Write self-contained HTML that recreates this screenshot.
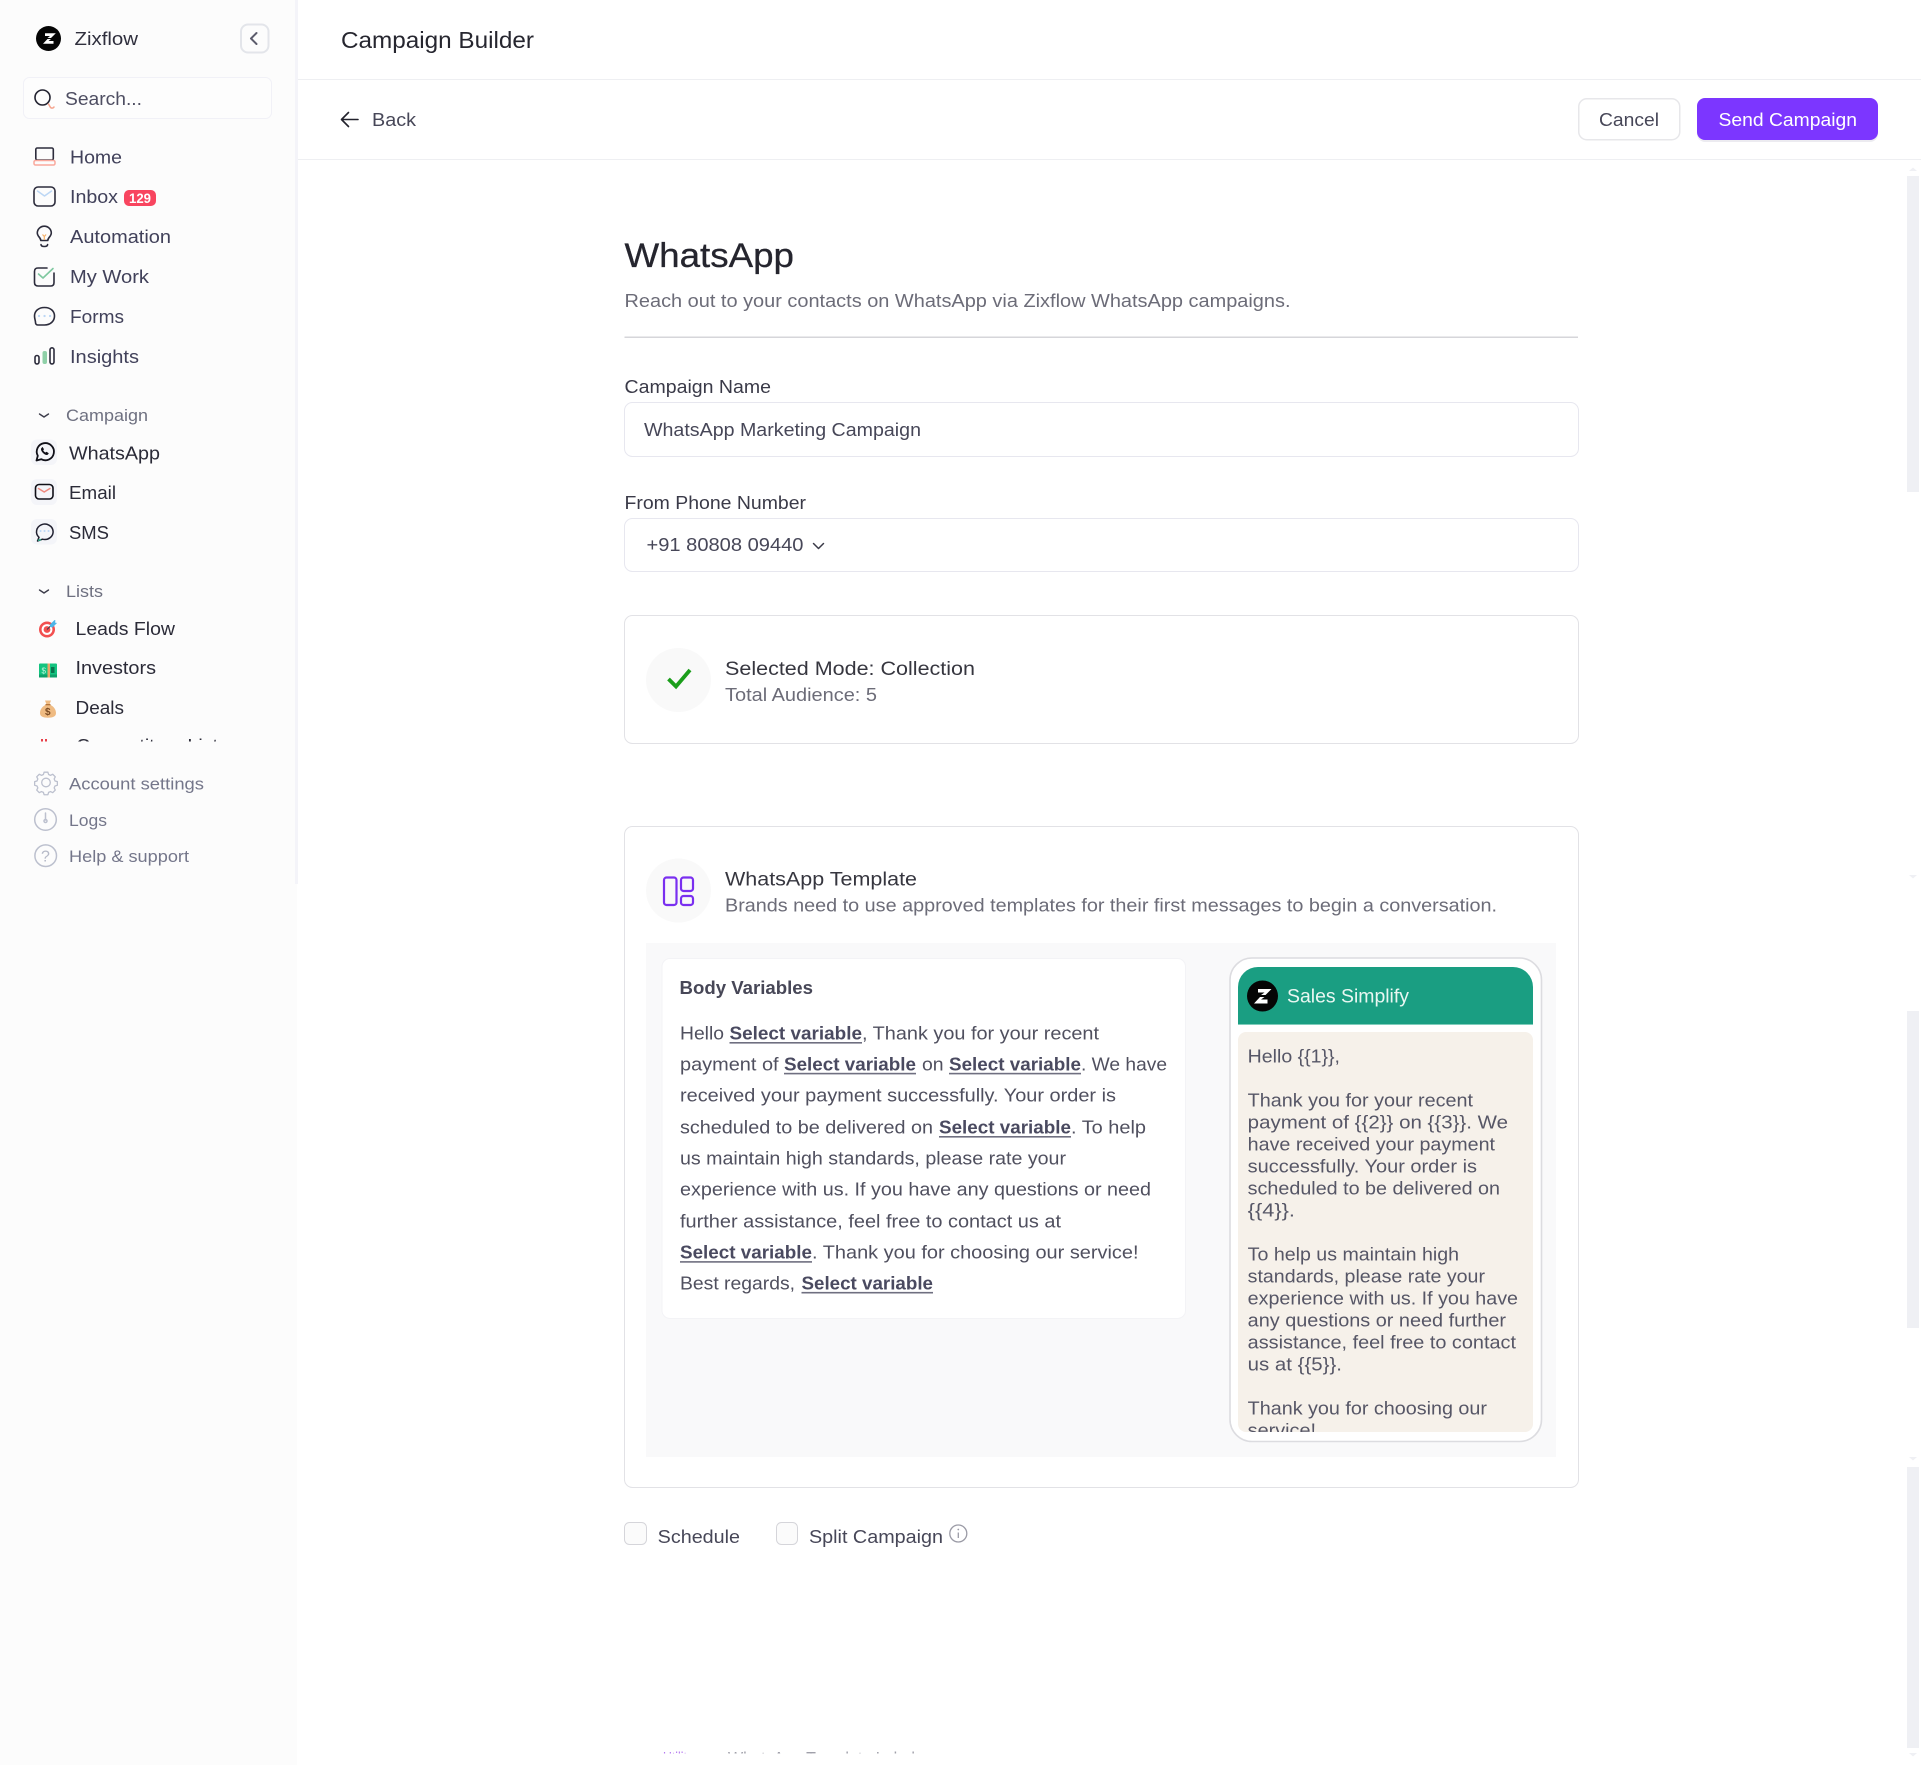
<!DOCTYPE html>
<html lang="en">
<head>
<meta charset="utf-8">
<title>Campaign Builder</title>
<style>
html,body{margin:0;padding:0;background:#fff;width:1921px;height:1765px;overflow:hidden}
svg{display:block}
text{font-family:"Liberation Sans",sans-serif;white-space:pre}
.nav{font-size:18px;fill:#41415a}
.item{font-size:18px;fill:#2b2b38}
.sec{font-size:17px;fill:#6e7080}
.foot{font-size:17px;fill:#74768a}
.lab{font-size:18px;fill:#3a3a48}
.sub{font-size:18px;fill:#6c6c78}
.val{font-size:18px;fill:#474758}
.tt{font-size:19px;fill:#36363f}
.b{font-size:18px;fill:#50505f}
.s{font-size:18px;fill:#4a4a60;font-weight:700}
.p{font-size:18px;fill:#565666}
.ic{fill:none;stroke:#2c2c3c;stroke-width:1.6;stroke-linecap:round;stroke-linejoin:round}
.fi{fill:none;stroke:#bcc0ce;stroke-width:1.5;stroke-linecap:round;stroke-linejoin:round}
</style>
</head>
<body>
<svg xmlns="http://www.w3.org/2000/svg" width="1921" height="1765" viewBox="0 0 1921 1765">
<defs>
<clipPath id="c1"><rect x="0" y="700" width="295" height="41.5"/></clipPath>
<clipPath id="c2"><rect x="1238" y="1032" width="295" height="400" rx="8"/></clipPath>
<clipPath id="c3"><rect x="600" y="1745" width="400" height="8.5"/></clipPath>
</defs>
<rect width="1921" height="1765" fill="#fff"/>

<!-- sidebar -->
<rect x="0" y="0" width="297" height="1765" fill="#fcfcfc"/>
<rect x="295" y="0" width="3" height="884" fill="#f4f4f9"/>

<circle cx="48.5" cy="38.5" r="12.5" fill="#050505"/>
<path d="M45 33.200H55.800L51 38H47.500L50 36H45zM43 43.800H53.500V41H48.500L51 39H47.500z" fill="#fff"/>
<text x="74.500" y="45" class="nav" style="fill:#2f2f3d" textLength="63.500" lengthAdjust="spacingAndGlyphs">Zixflow</text>
<rect x="241" y="24.500" width="27.500" height="28" rx="7" fill="#fcfcfc" stroke="#e3e5ea" stroke-width="2"/>
<path d="M256.500 33l-5.500 5.500 5.500 5.500" fill="none" stroke="#5c5c6c" stroke-width="2" stroke-linecap="round" stroke-linejoin="round"/>

<rect x="23.500" y="77.500" width="248" height="41" rx="6" fill="#fdfdfd" stroke="#f1f1f7"/>
<circle cx="42.500" cy="97.500" r="7.500" fill="none" stroke="#222230" stroke-width="1.600"/>
<path d="M48.500 104l2 3.500q2 1.500 3.500-.5" fill="none" stroke="#f5a58f" stroke-width="1.500" stroke-linecap="round"/>
<text x="65" y="105" class="nav" style="fill:#4e4e62" textLength="77" lengthAdjust="spacingAndGlyphs">Search...</text>

<rect x="35.800" y="148" width="17.500" height="12" rx="1.500" class="ic"/>
<rect x="34" y="160.500" width="21" height="4.500" rx="1.500" fill="none" stroke="#f9a89c" stroke-width="1.500"/>
<text x="70" y="163.500" class="nav" textLength="52" lengthAdjust="spacingAndGlyphs">Home</text>

<rect x="34" y="187" width="21" height="19" rx="4" class="ic"/>
<path d="M37.500 191l7 5 7-5" fill="none" stroke="#bcd7f5" stroke-width="1.500" stroke-linecap="round" stroke-linejoin="round"/>
<text x="70" y="203" class="nav" textLength="48" lengthAdjust="spacingAndGlyphs">Inbox</text>
<rect x="124" y="190" width="32" height="16" rx="5" fill="#f8455f"/>
<text x="129" y="203" style="font-size:14px;fill:#fff;font-weight:700" textLength="22" lengthAdjust="spacingAndGlyphs">129</text>

<path d="M40.800 240.500c0-3-3.500-4-3.500-7.500a7 6.800 0 0 1 14 0c0 3.500-3.500 4.500-3.500 7.500z" class="ic"/>
<path d="M41 244.500q0 2 3.300 2t3.300-2" class="ic"/>
<path d="M42.500 234.500l1.800 2 1.800-2M44.300 236.500v3.500" fill="none" stroke="#f6b26b" stroke-width="1.200"/>
<text x="70" y="243" class="nav" textLength="101" lengthAdjust="spacingAndGlyphs">Automation</text>

<path d="M47 268h-9q-3.500 0-3.500 3.500v11q0 3.500 3.500 3.500h13q3 0 3-3.500v-9.500" class="ic"/>
<path d="M38.500 274l4.500 4 10-9.500" fill="none" stroke="#7fc8a0" stroke-width="1.600" stroke-linecap="round" stroke-linejoin="round"/>
<text x="70" y="283" class="nav" textLength="79" lengthAdjust="spacingAndGlyphs">My Work</text>

<path d="M44.500 307.500c-6 0-10 3.500-10 8.500 0 2.800 1 4.500 1 6.500 0 1.500 1 2.500 2.500 2.500h6.500c6 0 10-4 10-9s-4-8.500-10-8.500z" class="ic"/>
<path d="M39 316h.1M44.500 316h.1M50 316h.1" stroke="#bcd7f5" stroke-width="2.200" stroke-linecap="round"/>
<text x="70" y="323" class="nav" textLength="54" lengthAdjust="spacingAndGlyphs">Forms</text>

<rect x="35" y="355.500" width="4" height="8.500" rx="2" class="ic"/>
<rect x="42.500" y="351" width="4.500" height="13" rx="2" fill="#8fd0a8"/>
<rect x="50" y="347.800" width="4" height="16.200" rx="2" class="ic"/>
<text x="70" y="363" class="nav" textLength="69" lengthAdjust="spacingAndGlyphs">Insights</text>

<path d="M39.500 414l4.500 3 4.500-3" fill="none" stroke="#3c3c4a" stroke-width="1.400" stroke-linecap="round" stroke-linejoin="round"/>
<text x="66" y="421" class="sec" textLength="82" lengthAdjust="spacingAndGlyphs">Campaign</text>

<rect x="31" y="439.500" width="26" height="25.500" rx="6" fill="#f4f5f9"/>
<path d="M36.500 460.500l1.300-4.700a8.600 8.600 0 1 1 3.400 3.400z" fill="none" stroke="#101018" stroke-width="1.800" stroke-linejoin="round"/>
<path d="M41.500 448c-1 1-.5 3 1.500 5s4 2.500 5 1.500l.8-1.300-2.300-1.500-1 .8c-1-.5-1.800-1.300-2.300-2.300l.8-1-1.500-2.300z" fill="#101018"/>
<text x="69" y="459.500" class="item" textLength="91" lengthAdjust="spacingAndGlyphs">WhatsApp</text>

<rect x="31" y="479" width="26" height="26" rx="6" fill="#f4f5f9"/>
<rect x="35.500" y="484.500" width="17.500" height="14.500" rx="3.500" fill="none" stroke="#101018" stroke-width="1.600"/>
<path d="M38.500 488.500l5.700 3.500 5.700-3.500" fill="none" stroke="#ee8a80" stroke-width="1.500" stroke-linecap="round"/>
<text x="69" y="499" class="item" textLength="47" lengthAdjust="spacingAndGlyphs">Email</text>

<rect x="31" y="519" width="26" height="25.500" rx="6" fill="#f4f5f9"/>
<path d="M37.500 541l1.500-3.700a8.300 7.700 0 1 1 3.500 1.900z" fill="none" stroke="#202030" stroke-width="1.500" stroke-linejoin="round"/>
<path d="M40.500 531h.1M44.500 531h.1M48.500 531h.1" stroke="#bcd7f5" stroke-width="2" stroke-linecap="round"/>
<path d="M38 540.500l3-1" stroke="#2fa98a" stroke-width="1.500"/>
<text x="69" y="539" class="item" textLength="40" lengthAdjust="spacingAndGlyphs">SMS</text>

<path d="M39.500 590l4.500 3 4.500-3" fill="none" stroke="#3c3c4a" stroke-width="1.400" stroke-linecap="round" stroke-linejoin="round"/>
<text x="66" y="597" class="sec" textLength="37" lengthAdjust="spacingAndGlyphs">Lists</text>

<circle cx="47" cy="629.500" r="8" fill="#f25050"/>
<circle cx="47" cy="629.500" r="5.400" fill="#fff"/>
<circle cx="47" cy="629.500" r="3.400" fill="#f25050"/>
<path d="M47 629.500l7-7" stroke="#3b3b4a" stroke-width="1"/>
<path d="M50 624.500l4.500-4.500 1 .5-.5 2 2 .5-4.500 4.500-2.500-.5z" fill="#4db5e8"/>
<text x="75.500" y="635" class="item" textLength="99.500" lengthAdjust="spacingAndGlyphs">Leads Flow</text>

<rect x="39" y="663.500" width="18" height="14" rx="1" fill="#14c480"/>
<rect x="39" y="674.500" width="18" height="3" fill="#0ea06a"/>
<rect x="47.500" y="663.500" width="2.500" height="14" fill="#e9a66a"/>
<rect x="51" y="667" width="3.500" height="6" fill="#08754e"/>
<text x="41.500" y="673.500" style="font-size:8px;fill:#bff5dd">$</text>
<text x="75.500" y="674" class="item" textLength="80.500" lengthAdjust="spacingAndGlyphs">Investors</text>

<path d="M45 700.500h6l-1.500 4c4 1.500 6.500 5 6.500 8.500 0 3.500-3 4.700-8 4.700s-8-1.200-8-4.700c0-3.500 2.500-7 6.500-8.500z" fill="#efbb82"/>
<rect x="45.500" y="704" width="5" height="1.300" fill="#b5763c"/>
<text x="45" y="715" style="font-size:10px;fill:#7a4a22;font-weight:700">$</text>
<text x="75.500" y="714" class="item" textLength="48.500" lengthAdjust="spacingAndGlyphs">Deals</text>

<g clip-path="url(#c1)">
<rect x="41" y="739" width="2" height="4" fill="#e8404a"/>
<rect x="45" y="739" width="2" height="4" fill="#e8404a"/>
<text x="76" y="752" class="item" textLength="142" lengthAdjust="spacingAndGlyphs">Competitors List</text>
</g>

<g class="fi" transform="translate(46 782.500) scale(.86) translate(-46 -782.500)">
<circle cx="46" cy="782.500" r="5"/>
<path d="M43.800 771.500h4.400l.8 2.700 2.300 1 2.500-1.300 3 3-1.300 2.500 1 2.300 2.700.8v4.200l-2.700.8-1 2.300 1.300 2.500-3 3-2.500-1.300-2.300 1-.8 2.700h-4.400l-.8-2.700-2.300-1-2.500 1.300-3-3 1.300-2.500-1-2.300-2.700-.8v-4.200l2.700-.8 1-2.300-1.300-2.500 3-3 2.500 1.300 2.300-1z" transform="translate(0 -1)"/>
</g>
<text x="69" y="789.500" class="foot" textLength="135" lengthAdjust="spacingAndGlyphs">Account settings</text>

<circle cx="45.500" cy="819.500" r="10.800" class="fi"/>
<path d="M45.500 813v7" class="fi"/>
<circle cx="45.500" cy="821" r="1.500" class="fi"/>
<text x="69" y="826" class="foot" textLength="38" lengthAdjust="spacingAndGlyphs">Logs</text>

<circle cx="45.700" cy="855.700" r="10.800" class="fi"/>
<text x="41" y="861.500" style="font-size:16px;fill:#b5b9c7">?</text>
<text x="69" y="862" class="foot" textLength="120" lengthAdjust="spacingAndGlyphs">Help &amp; support</text>

<!-- top bars -->
<rect x="298" y="79" width="1623" height="1" fill="#eeeff2"/>
<rect x="298" y="159" width="1623" height="1" fill="#eeeff2"/>
<text x="341" y="48" style="font-size:23px;fill:#26262f" textLength="193" lengthAdjust="spacingAndGlyphs">Campaign Builder</text>
<path d="M358 119.500H341.500M348.500 112.500l-7 7 7 7" fill="none" stroke="#22222c" stroke-width="1.600" stroke-linecap="round" stroke-linejoin="round"/>
<text x="372" y="126" class="val" textLength="44" lengthAdjust="spacingAndGlyphs">Back</text>

<rect x="1578.750" y="98.750" width="101" height="41" rx="8" fill="#fff" stroke="#e7e7ea" stroke-width="1.500"/>
<text x="1599" y="126" class="val" textLength="60" lengthAdjust="spacingAndGlyphs">Cancel</text>
<rect x="1697" y="99" width="181" height="43" rx="8" fill="#ecebf0"/>
<rect x="1697" y="98" width="181" height="42" rx="8" fill="#7c36ff"/>
<text x="1718.500" y="126" style="font-size:18.500px;fill:#fff" textLength="138.500" lengthAdjust="spacingAndGlyphs">Send Campaign</text>

<!-- heading -->
<text x="624.500" y="267" style="font-size:34px;fill:#25252e;stroke:#25252e;stroke-width:.3" textLength="169.500" lengthAdjust="spacingAndGlyphs">WhatsApp</text>
<text x="624.500" y="307" class="sub" textLength="666" lengthAdjust="spacingAndGlyphs">Reach out to your contacts on WhatsApp via Zixflow WhatsApp campaigns.</text>
<rect x="624.500" y="336.500" width="953.500" height="1.500" fill="#d6d6da"/>

<text x="624.500" y="393" class="lab" textLength="146.500" lengthAdjust="spacingAndGlyphs">Campaign Name</text>
<rect x="624.500" y="402.500" width="954" height="54" rx="8" fill="#fff" stroke="#e7e7ef"/>
<text x="644" y="436" class="val" textLength="277" lengthAdjust="spacingAndGlyphs">WhatsApp Marketing Campaign</text>

<text x="624.500" y="509" class="lab" textLength="181.500" lengthAdjust="spacingAndGlyphs">From Phone Number</text>
<rect x="624.500" y="518.500" width="954" height="53" rx="8" fill="#fff" stroke="#e7e7ef"/>
<text x="646.500" y="551" class="val" textLength="157" lengthAdjust="spacingAndGlyphs">+91 80808 09440</text>
<path d="M813.500 543.500l5 5 5-5" fill="none" stroke="#3a3a48" stroke-width="1.500" stroke-linecap="round" stroke-linejoin="round"/>

<rect x="624.500" y="615.500" width="954" height="128" rx="8" fill="#fff" stroke="#e2e2e6"/>
<ellipse cx="678.500" cy="680" rx="32.500" ry="32" fill="#f9f9f9"/>
<path d="M668.500 679l7.500 7.500 14-16.500" fill="none" stroke="#1b9e1b" stroke-width="3.800" stroke-linejoin="miter"/>
<text x="725" y="675" class="tt" textLength="250" lengthAdjust="spacingAndGlyphs">Selected Mode: Collection</text>
<text x="725" y="701" class="sub" textLength="152" lengthAdjust="spacingAndGlyphs">Total Audience: 5</text>

<rect x="624.500" y="826.500" width="954" height="661" rx="8" fill="#fff" stroke="#e2e2e6"/>
<ellipse cx="678.500" cy="890.500" rx="32.500" ry="32" fill="#f9f9f9"/>
<rect x="664" y="877.500" width="12.500" height="27.500" rx="2.500" fill="none" stroke="#7a2ff0" stroke-width="2.200"/>
<rect x="681" y="877.500" width="12" height="13.500" rx="2.500" fill="none" stroke="#7a2ff0" stroke-width="2.200"/>
<rect x="681" y="896" width="12" height="9" rx="2.500" fill="none" stroke="#7a2ff0" stroke-width="2.200"/>
<text x="725" y="885.500" class="tt" textLength="192" lengthAdjust="spacingAndGlyphs">WhatsApp Template</text>
<text x="725" y="911.500" class="sub" textLength="772" lengthAdjust="spacingAndGlyphs">Brands need to use approved templates for their first messages to begin a conversation.</text>

<rect x="646" y="943" width="910" height="514" fill="#f9f9fa"/>

<!-- body variables -->
<rect x="662" y="958.500" width="523.500" height="360" rx="8" fill="#fff" stroke="#f3f3f6"/>
<text x="679.500" y="994" style="font-size:18px;fill:#474757;font-weight:700" textLength="133.500" lengthAdjust="spacingAndGlyphs">Body Variables</text>

<text x="680" y="1039.500" class="b" textLength="44" lengthAdjust="spacingAndGlyphs">Hello</text>
<text x="729.500" y="1039.500" class="s" textLength="132.500" lengthAdjust="spacingAndGlyphs">Select variable</text>
<rect x="729.500" y="1042" width="132.500" height="1.600" fill="#6f6f80"/>
<text x="862" y="1039.500" class="b" textLength="237" lengthAdjust="spacingAndGlyphs">, Thank you for your recent</text>

<text x="680" y="1070.300" class="b" textLength="98.600" lengthAdjust="spacingAndGlyphs">payment of</text>
<text x="784" y="1070.300" class="s" textLength="132" lengthAdjust="spacingAndGlyphs">Select variable</text>
<rect x="784" y="1072.800" width="132" height="1.600" fill="#6f6f80"/>
<text x="922" y="1070.300" class="b" textLength="21.600" lengthAdjust="spacingAndGlyphs">on</text>
<text x="949" y="1070.300" class="s" textLength="132" lengthAdjust="spacingAndGlyphs">Select variable</text>
<rect x="949" y="1072.800" width="132" height="1.600" fill="#6f6f80"/>
<text x="1081" y="1070.300" class="b" textLength="86" lengthAdjust="spacingAndGlyphs">. We have</text>

<text x="680" y="1101.300" class="b" textLength="436" lengthAdjust="spacingAndGlyphs">received your payment successfully. Your order is</text>

<text x="680" y="1133.500" class="b" textLength="253" lengthAdjust="spacingAndGlyphs">scheduled to be delivered on</text>
<text x="939" y="1133.500" class="s" textLength="132" lengthAdjust="spacingAndGlyphs">Select variable</text>
<rect x="939" y="1136" width="132" height="1.600" fill="#6f6f80"/>
<text x="1071" y="1133.500" class="b" textLength="75" lengthAdjust="spacingAndGlyphs">. To help</text>

<text x="680" y="1164.700" class="b" textLength="386" lengthAdjust="spacingAndGlyphs">us maintain high standards, please rate your</text>
<text x="680" y="1195.500" class="b" textLength="471" lengthAdjust="spacingAndGlyphs">experience with us. If you have any questions or need</text>
<text x="680" y="1227.300" class="b" textLength="381" lengthAdjust="spacingAndGlyphs">further assistance, feel free to contact us at</text>

<text x="680" y="1258.600" class="s" textLength="132" lengthAdjust="spacingAndGlyphs">Select variable</text>
<rect x="680" y="1261.100" width="132" height="1.600" fill="#6f6f80"/>
<text x="812" y="1258.600" class="b" textLength="326.500" lengthAdjust="spacingAndGlyphs">. Thank you for choosing our service!</text>

<text x="680" y="1289.400" class="b" textLength="115" lengthAdjust="spacingAndGlyphs">Best regards,</text>
<text x="801.500" y="1289.400" class="s" textLength="131.500" lengthAdjust="spacingAndGlyphs">Select variable</text>
<rect x="801.500" y="1291.900" width="131.500" height="1.600" fill="#6f6f80"/>

<!-- phone -->
<rect x="1230" y="958" width="311.500" height="483.500" rx="22" fill="#fff" stroke="#dcdce0" stroke-width="1.600"/>
<path d="M1238 1024v-37a20 20 0 0 1 20-20h255a20 20 0 0 1 20 20v37z" fill="#1a9e82"/>
<rect x="1238" y="1024" width="295" height="1" fill="#7fcdbb"/>
<rect x="1238" y="1032" width="295" height="400" rx="8" fill="#f6f1ea"/>
<circle cx="1262.500" cy="996" r="15.500" fill="#050505"/>
<path d="M1258 989H1271.500L1265.500 995H1261L1264.500 992.500H1258zM1254 1003.500H1267.500V999.500H1261L1264.500 997H1260z" fill="#fff"/>
<text x="1287" y="1002.700" style="font-size:19px;fill:#e9f7f2" textLength="122" lengthAdjust="spacingAndGlyphs">Sales Simplify</text>
<g clip-path="url(#c2)">
<text x="1247.700" y="1062.700" class="p" textLength="92.300" lengthAdjust="spacingAndGlyphs">Hello {{1}},</text>
<text x="1247.700" y="1106.700" class="p" textLength="225.300" lengthAdjust="spacingAndGlyphs">Thank you for your recent</text>
<text x="1247.700" y="1128.700" class="p" textLength="260.300" lengthAdjust="spacingAndGlyphs">payment of {{2}} on {{3}}. We</text>
<text x="1247.700" y="1150.700" class="p" textLength="247.300" lengthAdjust="spacingAndGlyphs">have received your payment</text>
<text x="1247.700" y="1172.700" class="p" textLength="229.300" lengthAdjust="spacingAndGlyphs">successfully. Your order is</text>
<text x="1247.700" y="1194.700" class="p" textLength="252.300" lengthAdjust="spacingAndGlyphs">scheduled to be delivered on</text>
<text x="1247.700" y="1216.700" class="p" textLength="47.300" lengthAdjust="spacingAndGlyphs">{{4}}.</text>
<text x="1247.700" y="1260.700" class="p" textLength="211.300" lengthAdjust="spacingAndGlyphs">To help us maintain high</text>
<text x="1247.700" y="1282.700" class="p" textLength="237.300" lengthAdjust="spacingAndGlyphs">standards, please rate your</text>
<text x="1247.700" y="1304.700" class="p" textLength="270.300" lengthAdjust="spacingAndGlyphs">experience with us. If you have</text>
<text x="1247.700" y="1326.700" class="p" textLength="258.300" lengthAdjust="spacingAndGlyphs">any questions or need further</text>
<text x="1247.700" y="1348.700" class="p" textLength="268.300" lengthAdjust="spacingAndGlyphs">assistance, feel free to contact</text>
<text x="1247.700" y="1370.700" class="p" textLength="94.300" lengthAdjust="spacingAndGlyphs">us at {{5}}.</text>
<text x="1247.700" y="1414.700" class="p" textLength="239.300" lengthAdjust="spacingAndGlyphs">Thank you for choosing our</text>
<text x="1247.700" y="1436.700" class="p" textLength="68.300" lengthAdjust="spacingAndGlyphs">service!</text>
</g>

<!-- checkboxes -->
<rect x="624.500" y="1522.500" width="22" height="22" rx="5" fill="#fbfbfb" stroke="#d5d5da"/>
<text x="657.700" y="1543" class="val" textLength="82.300" lengthAdjust="spacingAndGlyphs">Schedule</text>
<rect x="776.500" y="1522.500" width="21" height="22" rx="5" fill="#fbfbfb" stroke="#d5d5da"/>
<text x="809" y="1543" class="val" textLength="134" lengthAdjust="spacingAndGlyphs">Split Campaign</text>
<circle cx="958.300" cy="1533.500" r="8.500" fill="none" stroke="#9b9ba6" stroke-width="1.300"/>
<path d="M958.300 1532.500v5.500" stroke="#9b9ba6" stroke-width="1.300"/>
<circle cx="958.300" cy="1529.500" r=".9" fill="#9b9ba6"/>

<g clip-path="url(#c3)">
<text x="663" y="1765" style="font-size:18px;fill:#b478f0" textLength="30" lengthAdjust="spacingAndGlyphs">Utility</text>
<text x="728" y="1765" style="font-size:18px;fill:#a0a0aa" textLength="187" lengthAdjust="spacingAndGlyphs">WhatsApp Template Label</text>
</g>

<!-- scroll bars -->
<g fill="#eff0f4">
<rect x="1907" y="176" width="12" height="316"/>
<path d="M1909 171l4-3.500 4 3.500z"/>
<path d="M1909 875h8l-4 3.500z"/>
<rect x="1907" y="1011" width="12" height="317"/>
<path d="M1909 1457h8l-4 3.500z"/>
<rect x="1907" y="1467" width="12" height="281"/>
<path d="M1909 1753h8l-4 3.500z"/>
</g>
</svg>
</body>
</html>
